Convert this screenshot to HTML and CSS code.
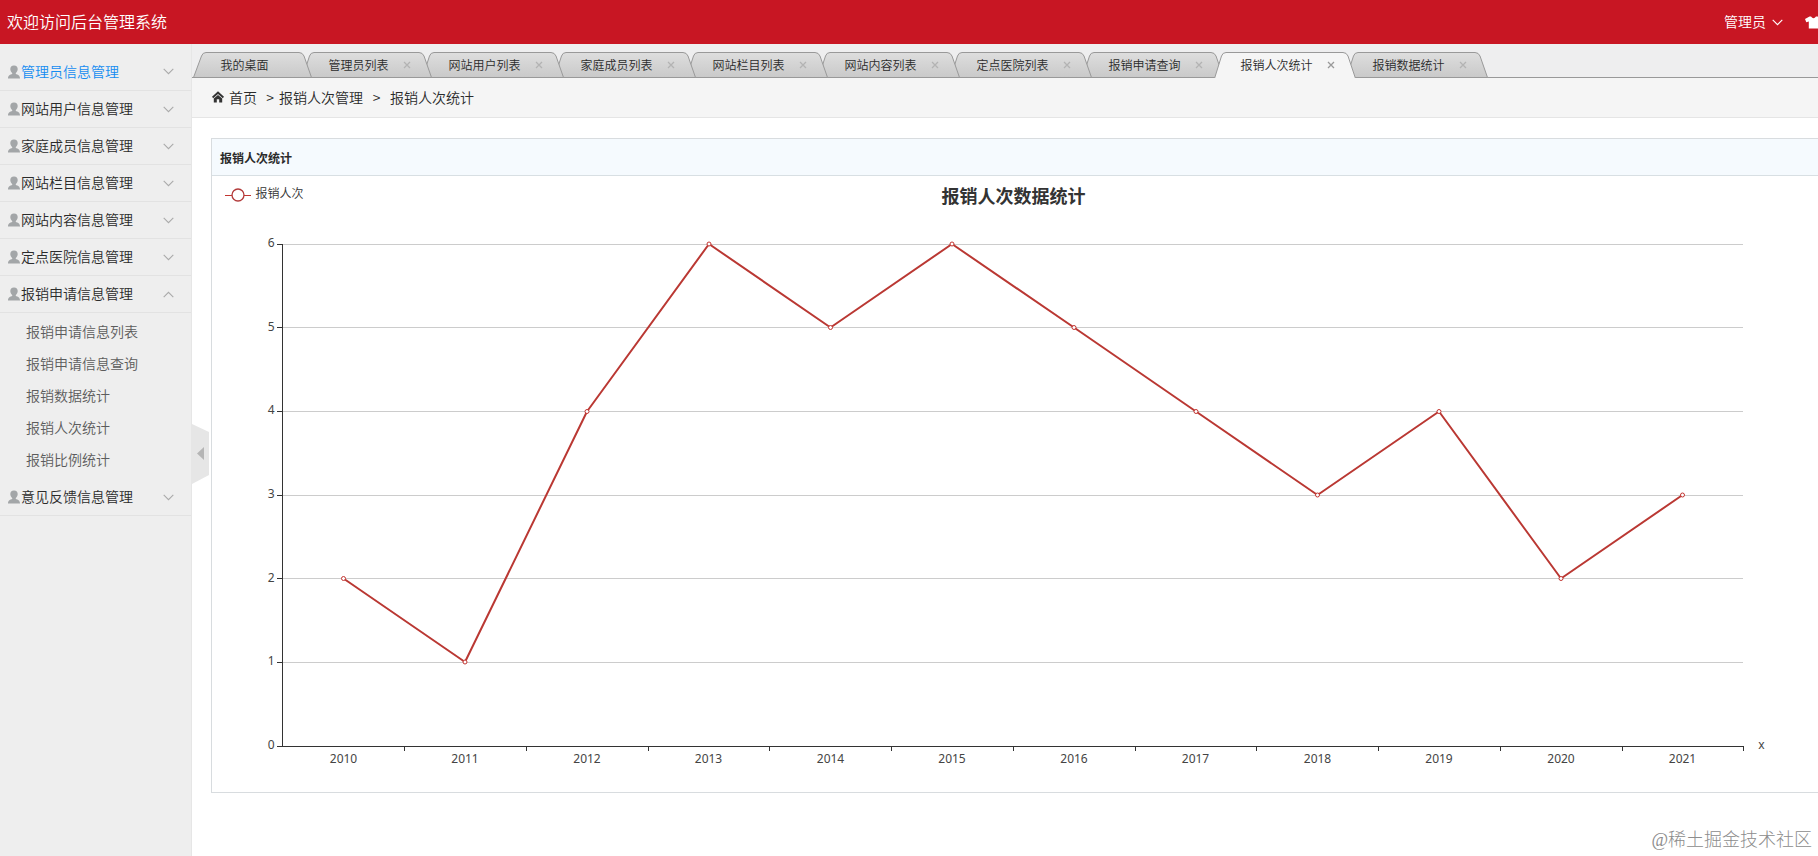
FILE: index.html
```html
<!DOCTYPE html>
<html lang="zh-CN">
<head>
<meta charset="utf-8">
<title>后台管理系统</title>
<link rel="stylesheet" href="styles.css">
</head>
<body>
<svg class="defs" width="0" height="0" aria-hidden="true">
  <defs>
    <linearGradient id="tab-fill" x1="0" y1="0" x2="0" y2="1"><stop offset="0" stop-color="#dedede"/><stop offset="1" stop-color="#c9c9c9"/></linearGradient>
    <symbol id="user" viewBox="0 0 12 14"><path d="M6 .4C3.400.4 2.300 2 2.300 4c0 1.800.8 3.200 1.900 4v1C2.300 9.700.1 10.100 0 13.500h12C11.900 10.100 9.700 9.700 7.800 9V8C8.900 7.200 9.700 5.800 9.700 4 9.700 2 8.600.4 6 .4z" fill="#a3a6a8"/></symbol>
    <symbol id="down" viewBox="0 0 11 7"><path d="M.7.8l4.800 4.800L10.300.8" fill="none" stroke="currentColor" stroke-width="1.100"/></symbol>
    <symbol id="up" viewBox="0 0 11 7"><path d="M.7 6.200l4.800-4.800 4.800 4.800" fill="none" stroke="currentColor" stroke-width="1.100"/></symbol>
    <symbol id="close" viewBox="0 0 8 8"><path d="M1 1l6 6M7 1l-6 6" fill="none" stroke="currentColor" stroke-width="1.300"/></symbol>
  </defs>
</svg>

<header class="topbar">
  <h1 class="brand">欢迎访问后台管理系统</h1>
  <div class="account"><span>管理员</span><svg class="account-arrow"><use href="#down"/></svg></div>
  <svg class="skin" viewBox="0 0 18 13"><path d="M4.500.5 0 3l1.300 3.300 2.500-.8v7h9.400v-7l2.500.8L17 3 12.500.5H11Q8.500 4 6 .5z" fill="#fff"/></svg>
</header>

<div class="layout">
  <aside class="sidebar">
    <div class="item current"><svg class="user"><use href="#user"/></svg><span>管理员信息管理</span><svg class="arrow"><use href="#down"/></svg></div>
    <div class="item"><svg class="user"><use href="#user"/></svg><span>网站用户信息管理</span><svg class="arrow"><use href="#down"/></svg></div>
    <div class="item"><svg class="user"><use href="#user"/></svg><span>家庭成员信息管理</span><svg class="arrow"><use href="#down"/></svg></div>
    <div class="item"><svg class="user"><use href="#user"/></svg><span>网站栏目信息管理</span><svg class="arrow"><use href="#down"/></svg></div>
    <div class="item"><svg class="user"><use href="#user"/></svg><span>网站内容信息管理</span><svg class="arrow"><use href="#down"/></svg></div>
    <div class="item"><svg class="user"><use href="#user"/></svg><span>定点医院信息管理</span><svg class="arrow"><use href="#down"/></svg></div>
    <div class="item"><svg class="user"><use href="#user"/></svg><span>报销申请信息管理</span><svg class="arrow"><use href="#up"/></svg></div>
    <ul class="submenu">
      <li>报销申请信息列表</li>
      <li>报销申请信息查询</li>
      <li>报销数据统计</li>
      <li>报销人次统计</li>
      <li>报销比例统计</li>
    </ul>
    <div class="item"><svg class="user"><use href="#user"/></svg><span>意见反馈信息管理</span><svg class="arrow"><use href="#down"/></svg></div>
    <svg class="handle" viewBox="0 0 17 60"><path d="M0 0l17 8v43L0 60z" fill="#e6e6e6"/><path d="M5 29.500L12 23v13z" fill="#b5b5b5"/></svg>
  </aside>

  <main class="main">
    <nav class="tabs">
      <div class="tab tab-home"><svg class="shape" viewBox="0 0 120 26"><path d="M.5 25.500L8.500 4Q9.700.5 13 .5H106Q109.500.5 111 4L118.500 25.500z"/></svg><span>我的桌面</span></div>
      <div class="tab tab-mid"><svg class="shape" viewBox="0 0 130 26"><path d="M.5 25.500L7.500 4Q8.700.5 12 .5H117Q120.500.5 122 4L129.500 25.500z"/></svg><span>管理员列表</span><svg class="close"><use href="#close"/></svg></div>
      <div class="tab"><svg class="shape" viewBox="0 0 142 26"><path d="M.5 25.500L7.500 4Q8.700.5 12 .5H129Q132.500.5 134 4L141.500 25.500z"/></svg><span>网站用户列表</span><svg class="close"><use href="#close"/></svg></div>
      <div class="tab"><svg class="shape" viewBox="0 0 142 26"><path d="M.5 25.500L7.500 4Q8.700.5 12 .5H129Q132.500.5 134 4L141.500 25.500z"/></svg><span>家庭成员列表</span><svg class="close"><use href="#close"/></svg></div>
      <div class="tab"><svg class="shape" viewBox="0 0 142 26"><path d="M.5 25.500L7.500 4Q8.700.5 12 .5H129Q132.500.5 134 4L141.500 25.500z"/></svg><span>网站栏目列表</span><svg class="close"><use href="#close"/></svg></div>
      <div class="tab"><svg class="shape" viewBox="0 0 142 26"><path d="M.5 25.500L7.500 4Q8.700.5 12 .5H129Q132.500.5 134 4L141.500 25.500z"/></svg><span>网站内容列表</span><svg class="close"><use href="#close"/></svg></div>
      <div class="tab"><svg class="shape" viewBox="0 0 142 26"><path d="M.5 25.500L7.500 4Q8.700.5 12 .5H129Q132.500.5 134 4L141.500 25.500z"/></svg><span>定点医院列表</span><svg class="close"><use href="#close"/></svg></div>
      <div class="tab"><svg class="shape" viewBox="0 0 142 26"><path d="M.5 25.500L7.500 4Q8.700.5 12 .5H129Q132.500.5 134 4L141.500 25.500z"/></svg><span>报销申请查询</span><svg class="close"><use href="#close"/></svg></div>
      <div class="tab active"><svg class="shape" viewBox="0 0 142 26"><path d="M.5 26.500L7.500 4Q8.700.5 12 .5H129Q132.500.5 134 4L141.500 26.500z"/></svg><span>报销人次统计</span><svg class="close"><use href="#close"/></svg></div>
      <div class="tab"><svg class="shape" viewBox="0 0 142 26"><path d="M.5 25.500L7.500 4Q8.700.5 12 .5H129Q132.500.5 134 4L141.500 25.500z"/></svg><span>报销数据统计</span><svg class="close"><use href="#close"/></svg></div>
    </nav>

    <div class="crumbs">
      <svg class="home" viewBox="0 0 12 12"><path d="M6 .3L0 5.800l1.200 1.400L6 2.900l4.800 4.300L12 5.800z" fill="#333"/><path d="M6 3.900L1.800 7.600V11.500h3V8.300h2.400v3.200h3V7.600z" fill="#333"/></svg>
      <span>首页</span><span class="sep first">&gt;</span><span>报销人次管理</span><span class="sep">&gt;</span><span>报销人次统计</span>
    </div>

    <section class="panel">
      <h2 class="panel-title">报销人次统计</h2>
      <svg class="chart" width="1606" height="616" viewBox="212 176 1606 616">
        <path class="legend-line" d="M225 195.500H251"/><circle class="legend-dot" cx="238" cy="195" r="6"/>
        <text class="label legend-text" x="255.500" y="198">报销人次</text>
        <text class="title" x="1013.500" y="203">报销人次数据统计</text>
        <path class="grid" d="M283 244.500H1743M283 327.500H1743M283 411.500H1743M283 495.500H1743M283 578.500H1743M283 662.500H1743"/>
        <path class="axis" d="M282.500 244V747M277 746.500H1744M277 244.500H282M277 327.500H282M277 411.500H282M277 495.500H282M277 578.500H282M277 662.500H282M404.500 747V751M526.500 747V751M648.500 747V751M769.500 747V751M891.500 747V751M1013.500 747V751M1135.500 747V751M1256.500 747V751M1378.500 747V751M1500.500 747V751M1622.500 747V751M1743.500 747V751"/>
        <g class="label end"><text x="274.500" y="247">6</text><text x="274.500" y="331">5</text><text x="274.500" y="414">4</text><text x="274.500" y="498">3</text><text x="274.500" y="582">2</text><text x="274.500" y="665">1</text><text x="274.500" y="749">0</text></g>
        <g class="label mid"><text x="343.500" y="763">2010</text><text x="465" y="763">2011</text><text x="587" y="763">2012</text><text x="708.500" y="763">2013</text><text x="830.500" y="763">2014</text><text x="952" y="763">2015</text><text x="1074" y="763">2016</text><text x="1195.500" y="763">2017</text><text x="1317.500" y="763">2018</text><text x="1439" y="763">2019</text><text x="1561" y="763">2020</text><text x="1682.500" y="763">2021</text><text x="1761.500" y="749">x</text></g>
        <polyline class="series" points="343.500,578.500 465,662 587,411.500 709,244 830.500,327.500 952,244 1074,327.500 1196,411.500 1317.500,495 1439,411.500 1561,578.500 1682.500,495"/>
        <g class="dots"><circle cx="343.500" cy="578.500" r="2"/><circle cx="465" cy="662" r="2"/><circle cx="587" cy="411.500" r="2"/><circle cx="709" cy="244" r="2"/><circle cx="830.500" cy="327.500" r="2"/><circle cx="952" cy="244" r="2"/><circle cx="1074" cy="327.500" r="2"/><circle cx="1196" cy="411.500" r="2"/><circle cx="1317.500" cy="495" r="2"/><circle cx="1439" cy="411.500" r="2"/><circle cx="1561" cy="578.500" r="2"/><circle cx="1682.500" cy="495" r="2"/></g>
      </svg>
    </section>
  </main>
</div>
<div class="watermark">@稀土掘金技术社区</div>
</body>
</html>
```
FILE: styles.css
```css
* { box-sizing: border-box; }
body {
  margin: 0;
  height: 856px;
  overflow: hidden;
  display: flex;
  flex-direction: column;
  background: #fff;
  color: #2b2b2b;
  font: 14px/20px "Noto Sans CJK SC", sans-serif;
  font-weight: 350;
}
.defs { position: absolute; }
svg { flex: none; }

.topbar {
  height: 44px;
  flex: none;
  display: flex;
  align-items: center;
  padding-left: 7px;
  background: #c81623;
  color: #fff;
}
.brand { margin: 0; padding-bottom: 2px; font-size: 16px; font-weight: 350; }
.account { display: flex; align-items: center; gap: 6px; margin-left: auto; }
.account span { padding-bottom: 2px; }
.account-arrow { width: 11px; height: 7px; }
.skin { width: 18px; height: 13px; margin: 0 -5px 0 22px; }

.layout { flex: 1; display: flex; min-height: 0; }
.sidebar {
  position: relative;
  width: 192px;
  flex: none;
  padding-top: 9px;
  background: #eee;
  border-right: 1px solid #e6e6e6;
}
.item {
  height: 37px;
  display: flex;
  align-items: center;
  padding: 0 17px 0 8px;
  border-bottom: 1px solid #e2e2e2;
}
.item span { padding-bottom: 2px; }
.item.current { height: 38px; color: #148cf1; }
.item .user { width: 12px; height: 14px; margin-right: 1px; }
.item .arrow { width: 11px; height: 7px; margin-left: auto; color: #aaa; }
.submenu { list-style: none; margin: 0; padding: 2px 0 4px 26px; color: #5c5c5c; }
.submenu li { height: 32px; line-height: 32px; }
.handle { position: absolute; left: 192px; top: 380px; width: 17px; height: 60px; }

.main { flex: 1; min-width: 0; }
.tabs {
  height: 34px;
  display: flex;
  align-items: flex-end;
  padding-left: 1px;
  background: #eeeeef;
  border-bottom: 1px solid #999;
}
.tab {
  position: relative;
  z-index: 1;
  width: 142px;
  height: 26px;
  flex: none;
  margin: 0 0 -1px -10px;
  padding: 0 12px 0 26.5px;
  display: flex;
  align-items: center;
  justify-content: space-between;
  font-size: 12px;
}
.tab-home { width: 119px; margin-left: 0; padding-left: 27.5px; z-index: 9; }
.tab-mid { width: 130px; z-index: 8; }
.tab:nth-child(3) { z-index: 7; }
.tab:nth-child(4) { z-index: 6; }
.tab:nth-child(5) { z-index: 5; }
.tab:nth-child(6) { z-index: 4; }
.tab:nth-child(7) { z-index: 3; }
.tab:nth-child(8) { z-index: 2; }
.tab.active { z-index: 10; }
.tab .shape { position: absolute; left: 0; top: 0; width: 142px; height: 26px; }
.tab-home .shape { width: 120px; }
.tab-mid .shape { width: 130px; }
.shape path { fill: url(#tab-fill); stroke: #999; }
.active .shape path { fill: #f5f5f5; }
.tab span { position: relative; }
.tab .close { position: relative; width: 8px; height: 8px; margin-right: 9px; color: #b3b3b3; }
.tab.active .close { color: #999; }

.crumbs {
  height: 40px;
  display: flex;
  align-items: center;
  padding-left: 20px;
  background: #f5f5f5;
  border-bottom: 1px solid #e5e5e5;
}
.crumbs span { padding-bottom: 2px; }
.home { width: 12px; height: 12px; margin: 0 5px 1px 0; }
.sep { width: 27px; text-align: center; }
.sep.first { width: 22px; padding-left: 4px; }

.panel {
  height: 655px;
  margin: 20px 0 0 19px;
  border: 1px solid #d8dcdf;
  border-right: 0;
}
.panel-title {
  height: 37px;
  margin: 0;
  padding-left: 8px;
  background: #f5fafe;
  border-bottom: 1px solid #d8dfe3;
  font-size: 12px;
  font-weight: 700;
  line-height: 37px;
}
.chart { display: block; }
.chart .label { fill: #444; font: 12px "Noto Sans", "Noto Sans CJK SC", sans-serif; }
.chart .legend-text { font-family: "Noto Sans CJK SC", sans-serif; font-weight: 350; fill: #333; }
.chart .end { text-anchor: end; }
.chart .mid { text-anchor: middle; }
.chart .title { fill: #333; font-size: 18px; font-weight: 700; text-anchor: middle; }
.grid { stroke: #ccc; }
.axis { stroke: #333; }
.legend-line { stroke: #c23531; }
.legend-dot { fill: #fff; stroke: #b23a3a; stroke-width: 1.3; }
.series { fill: none; stroke: #ba3833; stroke-width: 2; stroke-linejoin: bevel; }
.dots { fill: #fff; stroke: #c23531; }

.watermark {
  position: absolute;
  right: 6px;
  bottom: 3px;
  color: #8c8c8c;
  font-family: "Liberation Serif", "Noto Sans CJK SC", serif;
  font-weight: 300;
  font-size: 18px;
  line-height: 26px;
}
```
